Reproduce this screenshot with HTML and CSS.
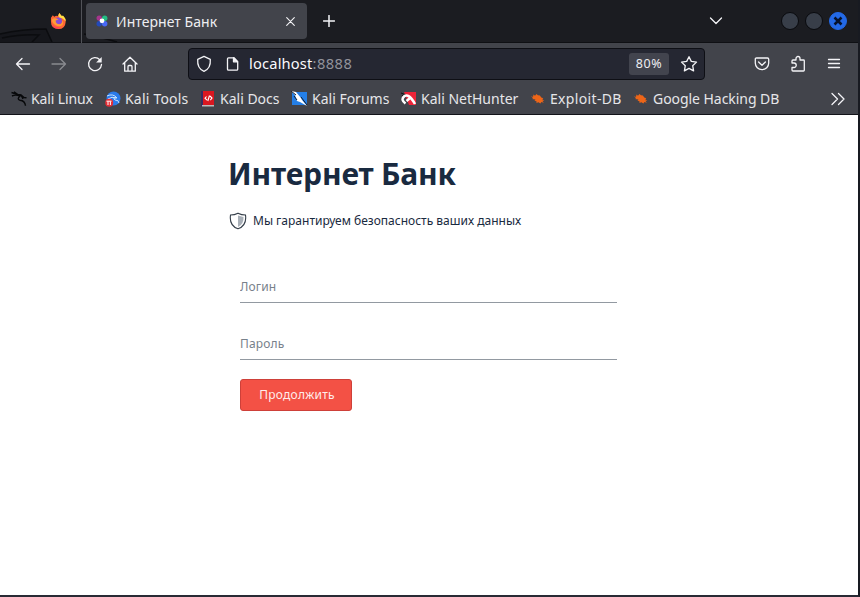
FILE: index.html
```html
<!DOCTYPE html>
<html lang="ru">
<head>
<meta charset="utf-8">
<title>Интернет Банк</title>
<link rel="stylesheet" href="styles.css">
</head>
<body>
<div class="window">
  <header class="titlebar">
    <svg class="wallpaper" width="130" height="42" viewBox="0 0 130 42"><path d="M0 34 18 31 46 29 52 42H0Z" fill="#15161b"/><path d="M0 34Q22 29 46 29L52 42M2 38Q22 34 39 35L32 42M84 34Q101 37 117 42" fill="none" stroke="#0b0c0f" stroke-width="1.5"/></svg>
    <div class="pinned">
      <svg width="17" height="17" viewBox="0 0 18 18"><path d="M1 5 3 2.5 4.5 4Q7 2 8 3.5L10 0 12 3 14 3.5Q17 6 16.5 10Q16 17 9 17Q1 17 1 9Z" fill="#ff6535"/><path d="M10 0 12 3 14 3Q17 6 16.5 9Q14 5 10 5Q8 3 10 0Z" fill="#ffe044"/><circle cx="9" cy="8.5" r="3.7" fill="#874bd5"/><path d="M2 7Q5 4 9 7L6 8Q6 12 10 12Q13 12 13 8Q15 10 13 13Q10 15 6 13Q2 11 2 7Z" fill="#ff9b37"/><path d="M2 11Q5 16 11 15Q8 18 4 15Z" fill="#ff3663"/></svg>
    </div>
    <div class="tab">
      <svg width="12" height="12" viewBox="0 0 12 12"><circle cx="3.2" cy="3.1" r="2.7" fill="#a5358c"/><circle cx="8.7" cy="3.2" r="2.7" fill="#21bd83"/><circle cx="3.2" cy="8.7" r="2.7" fill="#2349b9"/><circle cx="8.7" cy="8.7" r="2.7" fill="#4869f6"/><circle cx="6" cy="5.8" r="2.4" fill="#fff"/></svg>
      <span class="tab-title">Интернет Банк</span>
      <svg class="tab-close line" width="9" height="9" viewBox="0 0 9 9"><path d="m.7.7 7.6 7.6m0-7.6L.7 8.3"/></svg>
    </div>
    <svg class="new-tab line" width="12" height="12" viewBox="0 0 12 12"><path d="M6 .5v11M.5 6h11"/></svg>
    <svg class="all-tabs line" width="14" height="8" viewBox="0 0 14 8"><path d="m1.5 1 5.5 5.5L12.5 1"/></svg>
    <div class="controls">
      <i class="control"></i><i class="control"></i>
      <i class="control close"><svg width="10" height="10" viewBox="0 0 10 10"><path d="m1.5 1.5 7 7m0-7-7 7" stroke="#07122b" stroke-width="2.5"/></svg></i>
    </div>
  </header>

  <nav class="toolbar">
    <div class="nav-buttons">
      <svg class="line" width="16" height="16" viewBox="0 0 16 16"><path d="M14.5 8h-13M7 2.5 1.5 8 7 13.5"/></svg>
      <svg class="line dim" width="16" height="16" viewBox="0 0 16 16"><path d="M1 8h13.5M9 2.5 14.5 8 9 13.5"/></svg>
      <svg class="line" width="16" height="16" viewBox="0 0 16 16"><path d="M12.8 3.7A6.5 6.5 0 1 0 14.5 8.5"/><path d="M14.7 1v5.6H9.1Z" fill="#f4f4f7" stroke="none"/></svg>
      <svg class="line home" width="16" height="16" viewBox="0 0 16 16"><path d="M1 8 8 1.2 15 8M2.7 6.8v8.4h10.6V6.8M6 15v-4.5q0-1 1-1h2q1 0 1 1V15"/></svg>
    </div>
    <div class="address">
      <svg class="line shield-icon" width="16" height="18" viewBox="0 0 16 18"><path d="M8 1.4 14.3 4.4Q15 13.5 8 16.3Q1 13.5 1.7 4.4Z"/></svg>
      <svg class="line page-icon" width="13" height="16" viewBox="0 0 13 16"><path d="M2.5 1.8H8l3.7 3.8v7.6q0 1-1 1H2.5q-1 0-1-1V2.8q0-1 1-1Z"/><path d="M7.5 1.8v4H11.5Z" fill="#f4f4f7"/></svg>
      <span class="url">localhost<b>:8888</b></span>
      <span class="zoom">80%</span>
      <svg class="line" width="18" height="18" viewBox="0 0 18 18"><path d="m9 1.7 2.3 4.7 5.2.7-3.8 3.6.9 5.2L9 13.4l-4.6 2.5.9-5.2L1.5 7.1l5.2-.7Z"/></svg>
    </div>
    <div class="tools">
      <svg class="line" width="16" height="16" viewBox="0 0 16 16"><path d="M2.5 2h11q1.2 0 1.2 1.2V7a6.7 6.7 0 0 1-13.4 0V3.2Q1.3 2 2.5 2ZM4.6 6 8 9.2 11.4 6"/></svg>
      <svg class="line puzzle" width="16" height="18" viewBox="0 0 16 18"><path d="M2 8V6q0-1 1-1h3V3.5a2 2 0 0 1 4 0V5h3.5q.8 0 .8.8v9.4q0 .8-.8.8H3q-1 0-1-1v-2.5h2a2.2 2.2 0 0 0 0-4.5Z"/></svg>
      <svg class="line" width="14" height="12" viewBox="0 0 14 12"><path d="M1.5 1.5h11M1.5 5.5h11M1.5 9.5h11"/></svg>
    </div>
  </nav>

  <div class="bookmarks">
    <span class="bookmark b1"><svg width="16" height="16" viewBox="0 0 16 16"><path d="M.5 1.5 5 3l5 .8 3 2.7 2.5.3M1 5q4-2 8 .5M3 .8 9 5Q5.5 8.5 9 9.3q5 .5 5.5 5.5M10 4l2 4" fill="none" stroke="#07080a" stroke-width="1.4"/></svg><span>Kali Linux</span></span>
    <span class="bookmark b2"><svg width="16" height="16" viewBox="0 0 16 16"><circle cx="8.5" cy="7.5" r="7" fill="#2b7bea"/><path d="M2 5q6-3 10 2-5-1-2 2 4 0 4 3M3 8q4-3 8-1" fill="none" stroke="#c9e3ff"/><circle cx="4.2" cy="11.8" r="4" fill="#e32d35"/><path d="M1.5 10.2h5M3 10.5V14m2.4-3.5V14" stroke="#fff"/></svg><span>Kali Tools</span></span>
    <span class="bookmark b3"><svg width="15" height="16" viewBox="0 0 15 16"><path d="M0 0h3v15.5H0z" fill="#352b61"/><path d="M2 0h11v14H2z" fill="#d91720"/><path d="M1 14h12v1.5H1z" fill="#bbb"/><path d="M5.5 5.5 4 7.2l2 2M9 5l2 2-1.7 2.2M8.5 4.5 6.8 10" fill="none" stroke="#fff" stroke-width="1.1"/></svg><span>Kali Docs</span></span>
    <span class="bookmark b4"><svg width="17" height="16" viewBox="0 0 17 16"><path d="M1 1h15v13H1z" fill="#247fe7"/><path d="m0 0 5 1 5 6 1 2 5 6-7-4-3-1-2-6Z" fill="#fff"/><path d="m0 0 5 4M3 5l3 4m4-3 6 8" stroke="#121c2b"/></svg><span>Kali Forums</span></span>
    <span class="bookmark b5"><svg width="16" height="16" viewBox="0 0 16 16"><path d="M3 1h12v13H8Z" fill="#ed2438"/><path d="M0 2 5 4M1 4l2 2" stroke="#111"/><path d="M4.5 12.5Q-.5 9 3 5.5q4.5-4 11 7.5M5.5 10l3-2.5" fill="none" stroke="#fff" stroke-width="2.5"/></svg><span>Kali NetHunter</span></span>
    <span class="bookmark b6"><svg class="bug" width="16" height="12" viewBox="0 0 16 12"><path d="m1 3 2 1L3.5 1.5 5 2.7 6.5 1l1.4 1.3 2 .2 1.4 2 2 .7-1 1 2 1.6-2-.1 1.5 2-2.4-.7-1 1.5-2-1.2-2 .7.2-1.6-2.1-.8 1-1L1.7 6l1.5-.5Z" fill="#ed6518"/></svg><span>Exploit-DB</span></span>
    <span class="bookmark b7"><svg class="bug" width="16" height="12" viewBox="0 0 16 12"><path d="m1 3 2 1L3.5 1.5 5 2.7 6.5 1l1.4 1.3 2 .2 1.4 2 2 .7-1 1 2 1.6-2-.1 1.5 2-2.4-.7-1 1.5-2-1.2-2 .7.2-1.6-2.1-.8 1-1L1.7 6l1.5-.5Z" fill="#ed6518"/></svg><span>Google Hacking DB</span></span>
    <svg class="line overflow" width="14" height="14" viewBox="0 0 14 14"><path d="m1 1.5 5.5 5.5L1 12.5M7.5 1.5 13 7l-5.5 5.5"/></svg>
  </div>

  <main class="page">
    <h1>Интернет Банк</h1>
    <p class="security"><svg width="18" height="18" viewBox="0 0 18 18"><path d="M9 3.5 14.5 5Q15 12 9 15Z" fill="#a8afb7"/><path d="M9 1.2Q12.5 3 16.5 3Q18 13.7 9 16.8Q0 13.7 1.5 3 5.5 3 9 1.2Z" fill="none" stroke="#343e49" stroke-width="1.1"/></svg><span>Мы гарантируем безопасность ваших данных</span></p>
    <form>
      <input class="login" type="text" placeholder="Логин" aria-label="Логин">
      <input class="password" type="password" placeholder="Пароль" aria-label="Пароль">
      <button type="button">Продолжить</button>
    </form>
  </main>
</div>
</body>
</html>
```
FILE: styles.css
```css
* { box-sizing: border-box; }
body { margin: 0; background: #23242d; font-family: "Noto Sans", sans-serif; }
svg { display: block; flex: none; }
.line { fill: none; stroke: #f4f4f7; stroke-width: 1.3; stroke-linecap: round; stroke-linejoin: round; }
.dim { opacity: .4; }
.window { width: 860px; height: 597px; overflow: hidden; border-right: 2px solid #181a21; border-bottom: 2px solid #292a34; }

.titlebar { position: relative; display: flex; align-items: center; height: 43px; background: #1b1c21; border-bottom: 1px solid #0f1014; }
.wallpaper { position: absolute; left: 0; top: 0; }
.pinned { position: relative; display: flex; align-items: center; width: 82px; height: 43px; padding-left: 50px; border-right: 1px solid #515258; }
.tab { position: relative; display: flex; align-items: center; width: 221px; height: 36px; margin-left: 4px; padding: 0 12px 0 10px; border-radius: 4px; background: #42444b; color: #eeeef2; }
.tab-title { margin-left: 8px; font-size: 14px; letter-spacing: .05px; white-space: nowrap; }
.tab-close { margin-left: auto; stroke-width: 1.1; }
.new-tab { margin-left: 16px; stroke-width: 1.5; }
.all-tabs { margin-left: 374px; }
.controls { display: flex; align-items: center; gap: 6px; margin-left: auto; margin-right: 11px; }
.control { display: grid; place-items: center; width: 18px; height: 18px; border: 1px solid #090a0e; border-radius: 50%; background: #383e49; }
.close { background: #2369e7; border-color: #2369e7; }

.toolbar { display: flex; align-items: center; height: 41px; background: #42444b; }
.nav-buttons { display: flex; gap: 20px; width: 188px; padding-left: 15px; }
.home { margin-left: -1px; }
.address { display: flex; align-items: center; width: 517px; height: 32px; padding: 0 6px 0 7px; border: 1px solid #0e0f15; border-radius: 4px; background: #252732; }
.page-icon { margin-left: 14px; }
.url { margin-left: 10px; padding-bottom: 2px; color: #fbfbfe; font-size: 14.67px; letter-spacing: .18px; }
.url b { color: #92939b; font-weight: 400; letter-spacing: .45px; }
.zoom { width: 40px; height: 22px; margin: 0 11px 0 auto; border-radius: 3px; background: #42444e; color: #eeeef2; font-size: 12.5px; letter-spacing: .6px; line-height: 22px; text-align: center; }
.tools { display: flex; align-items: center; gap: 20px; margin-left: 49px; }
.puzzle { margin-right: 1px; }

.bookmarks { display: flex; align-items: center; height: 31px; background: #42444b; border-bottom: 1px solid #121319; color: #e6e6e9; font-size: 14px; }
.bookmark { display: flex; align-items: center; gap: 4px; height: 30px; white-space: nowrap; }
.bookmark span { padding-bottom: 1px; }
.b1 { width: 94px; margin-left: 11px; letter-spacing: -.12px; }
.b2 { width: 96px; letter-spacing: .2px; }
.b3 { width: 90px; }
.b4 { width: 110px; }
.b5 { width: 129px; }
.b6 { width: 103px; letter-spacing: .34px; }
.b7 { width: 145px; letter-spacing: -.05px; }
.overflow { margin-left: auto; margin-right: 13px; }

.page { height: 481px; padding: 37px 229px 0 228px; background: #fff; color: #192a40; }
h1 { height: 43px; margin: 0; font-size: 30px; font-weight: 700; line-height: 43px; letter-spacing: -.18px; white-space: nowrap; }
.security { display: flex; align-items: center; gap: 6px; height: 18px; margin: 17px 0 0 1px; font-size: 12px; letter-spacing: 0; white-space: nowrap; }
.security span { padding-bottom: 1px; }
form { display: flex; flex-direction: column; align-items: flex-start; width: 377px; margin: 41px 0 0 12px; }
input { width: 377px; height: 32px; margin: 0 0 25px; padding: 0 0 1px; border: 0; border-bottom: 1px solid #9299a1; outline: 0; background: none; font: 12px "Noto Sans", sans-serif; letter-spacing: .15px; }
input::placeholder { color: #78818b; opacity: 1; }
.password { margin-bottom: 19px; }
button { width: 112px; height: 32px; padding: 0 0 1px 2px; border: 1px solid #ce4039; border-radius: 3px; background: #f35145; color: #ffeceb; font: 12px "Noto Sans", sans-serif; letter-spacing: .24px; }
```
